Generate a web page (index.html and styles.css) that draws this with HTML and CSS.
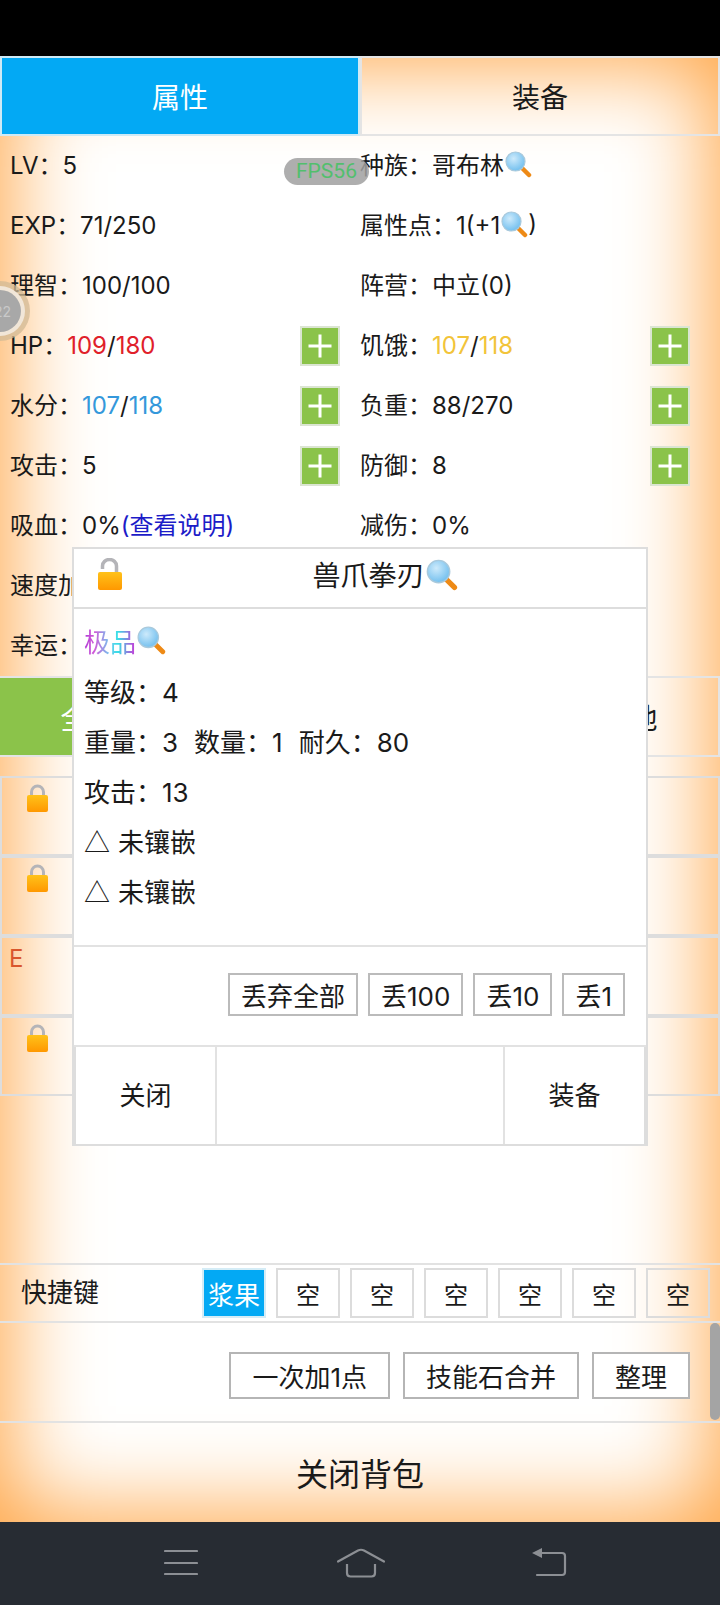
FILE: index.html
```html
<!DOCTYPE html>
<html lang="en">
<head>
    <meta charset="UTF-8">
    <meta name="viewport" content="width=device-width, initial-scale=1.0">
    <title>背包</title>
    <link rel="stylesheet" href="styles.css">
</head>
<body>
    <svg class="defs" width="0" height="0">
        <defs>
            <linearGradient id="lockBody" x1="0" y1="0" x2="0" y2="1">
                <stop offset="0" stop-color="#ffc21a"/>
                <stop offset="1" stop-color="#ff9800"/>
            </linearGradient>
            <radialGradient id="glass" cx="0.4" cy="0.35" r="0.7">
                <stop offset="0" stop-color="#cdeafb"/>
                <stop offset="1" stop-color="#6dbdee"/>
            </radialGradient>
            <symbol id="search" viewBox="0 0 28 28">
                <path d="M17 17l8 8" stroke="#ee8a16" stroke-width="4.500" stroke-linecap="round"/>
                <circle cx="11.500" cy="11.500" r="9.500" fill="url(#glass)" stroke="#a9c9dc" stroke-width="1.200"/>
            </symbol>
            <symbol id="lock" viewBox="0 0 21 28">
                <path d="M4.500 13V8a6 6 0 0 1 12 0v5" fill="none" stroke="#b4b4b8" stroke-width="3"/>
                <rect x="0" y="11" width="21" height="17" rx="2" fill="url(#lockBody)"/>
            </symbol>
            <symbol id="lockOpen" viewBox="0 0 24 32">
                <path d="M4.500 11V8a7 6.500 0 0 1 14 0v7" fill="none" stroke="#b4b4b8" stroke-width="3.500"/>
                <rect x="0" y="14" width="24" height="18" rx="2" fill="url(#lockBody)"/>
            </symbol>
            <symbol id="plus" viewBox="0 0 36 36">
                <path d="M18 6.500v23M6.500 18h23" stroke="#fff" stroke-width="3"/>
            </symbol>
        </defs>
    </svg>

    <div class="status-bar"></div>

    <div class="app">
        <div class="tabs">
            <div class="tab tab-active">属性</div>
            <div class="tab">装备</div>
        </div>

        <div class="stats">
            <div class="stat stat-left">LV：5</div>
            <div class="stat stat-right">种族：哥布林<svg class="icon-search"><use href="#search"/></svg></div>
            <div class="stat stat-left">EXP：71/250</div>
            <div class="stat stat-right">属性点：1(+1<svg class="icon-search"><use href="#search"/></svg>)</div>
            <div class="stat stat-left">理智：100/100</div>
            <div class="stat stat-right">阵营：中立(0)</div>
            <div class="stat stat-left">
                <span>HP：<span class="red">109</span>/<span class="red">180</span></span>
                <button class="plus"><svg width="36" height="36"><use href="#plus"/></svg></button>
            </div>
            <div class="stat stat-right">
                <span>饥饿：<span class="yellow">107</span>/<span class="yellow">118</span></span>
                <button class="plus"><svg width="36" height="36"><use href="#plus"/></svg></button>
            </div>
            <div class="stat stat-left">
                <span>水分：<span class="blue">107</span>/<span class="blue">118</span></span>
                <button class="plus"><svg width="36" height="36"><use href="#plus"/></svg></button>
            </div>
            <div class="stat stat-right">
                <span>负重：88/270</span>
                <button class="plus"><svg width="36" height="36"><use href="#plus"/></svg></button>
            </div>
            <div class="stat stat-left">
                <span>攻击：5</span>
                <button class="plus"><svg width="36" height="36"><use href="#plus"/></svg></button>
            </div>
            <div class="stat stat-right">
                <span>防御：8</span>
                <button class="plus"><svg width="36" height="36"><use href="#plus"/></svg></button>
            </div>
            <div class="stat stat-left">吸血：0%<span class="link">(查看说明)</span></div>
            <div class="stat stat-right">减伤：0%</div>
            <div class="stat stat-left">速度加成：0%</div>
            <div class="stat stat-right"></div>
            <div class="stat stat-left">幸运：0</div>
            <div class="stat stat-right"></div>
        </div>

        <div class="bag-tabs">
            <div class="bag-tab bag-tab-active">全部</div>
            <div class="bag-tab">装备</div>
            <div class="bag-tab">消耗</div>
            <div class="bag-tab">其他</div>
        </div>

        <div class="items">
            <div class="item"><svg class="icon-lock"><use href="#lock"/></svg></div>
            <div class="item"><svg class="icon-lock"><use href="#lock"/></svg></div>
            <div class="item item-equip">E</div>
            <div class="item"><svg class="icon-lock"><use href="#lock"/></svg></div>
        </div>

        <div class="shortcuts">
            <div class="shortcut-label">快捷键</div>
            <div class="slot slot-active">浆果</div>
            <div class="slot">空</div>
            <div class="slot">空</div>
            <div class="slot">空</div>
            <div class="slot">空</div>
            <div class="slot">空</div>
            <div class="slot">空</div>
        </div>

        <div class="tools">
            <button class="tool-btn">一次加1点</button>
            <button class="tool-btn">技能石合并</button>
            <button class="tool-btn">整理</button>
        </div>

        <div class="close-bag">关闭背包</div>

        <!-- floating things on top of the page -->
        <div class="fps">FPS56</div>
        <div class="ball"><span>22</span></div>
        <div class="scrollbar"></div>

        <div class="modal">
            <div class="modal-head">
                <svg class="icon-lock-open"><use href="#lockOpen"/></svg>
                <span>兽爪拳刃</span><svg class="icon-search icon-search-big"><use href="#search"/></svg>
            </div>
            <div class="modal-body">
                <div class="line"><span class="rare">极品</span><svg class="icon-search icon-search-mid"><use href="#search"/></svg></div>
                <div class="line">等级：4</div>
                <div class="line">重量：3&nbsp;&nbsp;数量：1&nbsp;&nbsp;耐久：80</div>
                <div class="line">攻击：13</div>
                <div class="line"><span class="tri">△</span>&nbsp;未镶嵌</div>
                <div class="line"><span class="tri">△</span>&nbsp;未镶嵌</div>
            </div>
            <div class="modal-drop">
                <button class="drop-btn">丢弃全部</button>
                <button class="drop-btn">丢100</button>
                <button class="drop-btn">丢10</button>
                <button class="drop-btn">丢1</button>
            </div>
            <div class="modal-foot">
                <div class="foot-cell foot-side">关闭</div>
                <div class="foot-cell foot-mid"></div>
                <div class="foot-cell foot-side">装备</div>
            </div>
        </div>
    </div>

    <div class="nav-bar">
        <svg width="34" height="28" viewBox="0 0 34 28" class="nav-icon">
            <path d="M1 3h32M1 15h32M1 26h32" stroke="#8c8f94" stroke-width="2.200" stroke-linecap="round"/>
        </svg>
        <svg width="48" height="30" viewBox="0 0 48 30" class="nav-icon">
            <path d="M1 13.500L21 2.500q3-1.500 6 0L47 13.500" fill="none" stroke="#8c8f94" stroke-width="2.200" stroke-linecap="round"/>
            <path d="M10 16v9q0 3.500 3.500 3.500h21q3.500 0 3.500-3.500v-9" fill="none" stroke="#8c8f94" stroke-width="2.200"/>
        </svg>
        <svg width="36" height="30" viewBox="0 0 36 30" class="nav-icon">
            <path d="M1 5L11 0v10z" fill="#8c8f94"/>
            <path d="M10 5h21q3 0 3 3v16q0 3-3 3H6" fill="none" stroke="#8c8f94" stroke-width="2.200" stroke-linecap="round"/>
        </svg>
    </div>
</body>
</html>
```

FILE: styles.css
```css
* {
    box-sizing: border-box;
}

html, body {
    margin: 0;
    padding: 0;
}

body {
    width: 720px;
    height: 1605px;
    overflow: hidden;
    font-family: Inter, "Noto Sans CJK SC", sans-serif;
    font-size: 24px;
    color: #1a1a1a;
    background-color: #fff;
}

button {
    font-family: inherit;
    color: inherit;
    background-color: transparent;
    cursor: pointer;
}

.defs {
    position: absolute;
}

.status-bar {
    height: 56px;
    background-color: #000;
}

.app {
    position: relative;
    height: 1466px;
    overflow: hidden;
    background-color: #fff;
    box-shadow: inset 0 0 90px 8px #ffa340;
}

/* top tabs */
.tabs {
    display: flex;
    height: 80px;
}

.tab {
    flex: 1;
    display: flex;
    align-items: center;
    justify-content: center;
    font-size: 28px;
    border: 2px solid #e4e4e4;
}

.tab-active {
    background-color: #03a9f4;
    border-color: #cfeaf5;
    color: #fff;
}

/* stats */
.stats {
    display: grid;
    grid-template-columns: 360px 360px;
    grid-auto-rows: 60px;
}

.stat {
    display: flex;
    align-items: center;
    justify-content: flex-start;
    padding-bottom: 5px;
    white-space: nowrap;
}

.stat-left {
    padding-left: 10px;
    padding-right: 20px;
}

.stat-right {
    padding-right: 30px;
}

.plus {
    width: 40px;
    height: 40px;
    margin-left: auto;
    margin-bottom: -5px;
    padding: 0;
    display: flex;
    align-items: center;
    justify-content: center;
    background-color: #8bc34a;
    border: 2px solid #dbe5d2;
}

.red {
    color: #e0202a;
}

.yellow {
    color: #f2c43a;
}

.blue {
    color: #3498db;
}

.link {
    color: #1c1cc8;
}

.icon-search {
    width: 28px;
    height: 28px;
    flex: none;
}

.icon-search-mid {
    width: 30px;
    height: 30px;
}

.icon-search-big {
    width: 33px;
    height: 33px;
}

/* bag */
.bag-tabs {
    display: flex;
    height: 81px;
}

.bag-tab {
    flex: 1;
    display: flex;
    align-items: center;
    justify-content: center;
    font-size: 28px;
    border: 2px solid #e4e4e4;
}

.bag-tab-active {
    background-color: #8bc34a;
    border-left: 0;
    border-right: 0;
    color: #fff;
}

.items {
    margin-top: 19px;
    height: 320px;
}

.item {
    height: 80px;
    padding: 6px 0 0 25px;
    border: 2px solid #ddd;
}

.item-equip {
    padding: 6px 0 0 7px;
    color: #d9562c;
}

.icon-lock {
    display: block;
    width: 21px;
    height: 28px;
}

/* shortcut keys */
.shortcuts {
    margin-top: 167px;
    height: 60px;
    display: flex;
    align-items: center;
    padding-left: 21px;
    border-top: 2px solid #e2e2e2;
    border-bottom: 2px solid #e2e2e2;
}

.shortcut-label {
    width: 181px;
    margin-top: -6px;
    font-size: 26px;
}

.slot {
    width: 64px;
    height: 50px;
    margin-right: 10px;
    flex: none;
    display: flex;
    align-items: center;
    justify-content: center;
    border: 2px solid #dcdcdc;
}

.slot-active {
    font-size: 26px;
    background-color: #03a9f4;
    border-color: #d4ecf6;
    color: #fff;
}

.tools {
    height: 100px;
    display: flex;
    align-items: center;
    justify-content: flex-end;
    gap: 13px;
    padding-top: 6px;
    padding-right: 30px;
    border-bottom: 2px solid #e2e2e2;
}

.tool-btn {
    height: 47px;
    padding: 0 21px;
    font-size: 26px;
    border: 2px solid #b5b5b5;
    background-color: #fff;
}

.close-bag {
    height: 99px;
    display: flex;
    align-items: center;
    justify-content: center;
    padding-bottom: 2px;
    font-size: 32px;
}

/* overlays */
.fps {
    position: absolute;
    left: 284px;
    top: 102px;
    width: 85px;
    height: 27px;
    line-height: 27px;
    padding-left: 12px;
    border-radius: 14px;
    font-family: Roboto, sans-serif;
    font-size: 21px;
    color: #52bf6d;
    background-color: rgba(160, 160, 160, 0.85);
}

.ball {
    position: absolute;
    left: -21px;
    top: 234px;
    width: 42px;
    height: 42px;
    display: flex;
    align-items: center;
    justify-content: flex-end;
    padding-right: 10px;
    border-radius: 50%;
    font-size: 14px;
    color: #c9c9c9;
    background-color: #a8a8a8;
    box-shadow: 0 0 0 4px #f1e6d8, 0 0 0 9px rgba(210, 185, 150, 0.75);
}

.scrollbar {
    position: absolute;
    right: 0;
    top: 1267px;
    width: 10px;
    height: 97px;
    border-radius: 5px;
    background-color: #a4a4a4;
}

.modal {
    position: absolute;
    left: 72px;
    top: 491px;
    width: 576px;
    height: 599px;
    display: flex;
    flex-direction: column;
    background-color: #fff;
    border: 2px solid #ddd;
}

.modal-head {
    position: relative;
    height: 60px;
    flex: none;
    display: flex;
    align-items: center;
    justify-content: center;
    padding-left: 50px;
    padding-bottom: 8px;
    font-size: 28px;
    border-bottom: 2px solid #ddd;
}

.icon-lock-open {
    position: absolute;
    left: 24px;
    top: 9px;
    width: 24px;
    height: 32px;
}

.modal-body {
    height: 338px;
    flex: none;
    padding: 6px 10px 0;
    font-size: 26px;
    border-bottom: 2px solid #e2e2e2;
}

.line {
    height: 50px;
    display: flex;
    align-items: center;
    white-space: pre;
    word-spacing: 0.7px;
}

.tri {
    font-family: "Noto Sans CJK SC", sans-serif;
}

.rare {
    color: transparent;
    background-image: linear-gradient(90deg, #b03ad6, #d05ad8 20%, #70c8f0 50%, #35e0e6 65%, #d030d8);
    -webkit-background-clip: text;
    background-clip: text;
}

.modal-drop {
    height: 100px;
    flex: none;
    display: flex;
    align-items: center;
    justify-content: flex-end;
    gap: 10px;
    padding-right: 21px;
    padding-bottom: 4px;
    border-bottom: 2px solid #e2e2e2;
}

.drop-btn {
    height: 43px;
    padding: 0 11px;
    font-size: 26px;
    border: 2px solid #bbb;
    background-color: #fff;
}

.modal-foot {
    flex: 1;
    display: flex;
    font-size: 26px;
    border-left: 2px solid #ddd;
    border-right: 2px solid #ddd;
}

.foot-cell {
    display: flex;
    align-items: center;
    justify-content: center;
    padding-bottom: 4px;
}

.foot-side {
    width: 139px;
}

.foot-mid {
    flex: 1;
    border-left: 2px solid #e2e2e2;
    border-right: 2px solid #e2e2e2;
}

.nav-bar {
    height: 83px;
    position: relative;
    background-color: #272c33;
}

.nav-icon {
    position: absolute;
    top: 26px;
}

.nav-icon:nth-child(1) {
    left: 164px;
}

.nav-icon:nth-child(2) {
    left: 337px;
}

.nav-icon:nth-child(3) {
    left: 531px;
}
```
